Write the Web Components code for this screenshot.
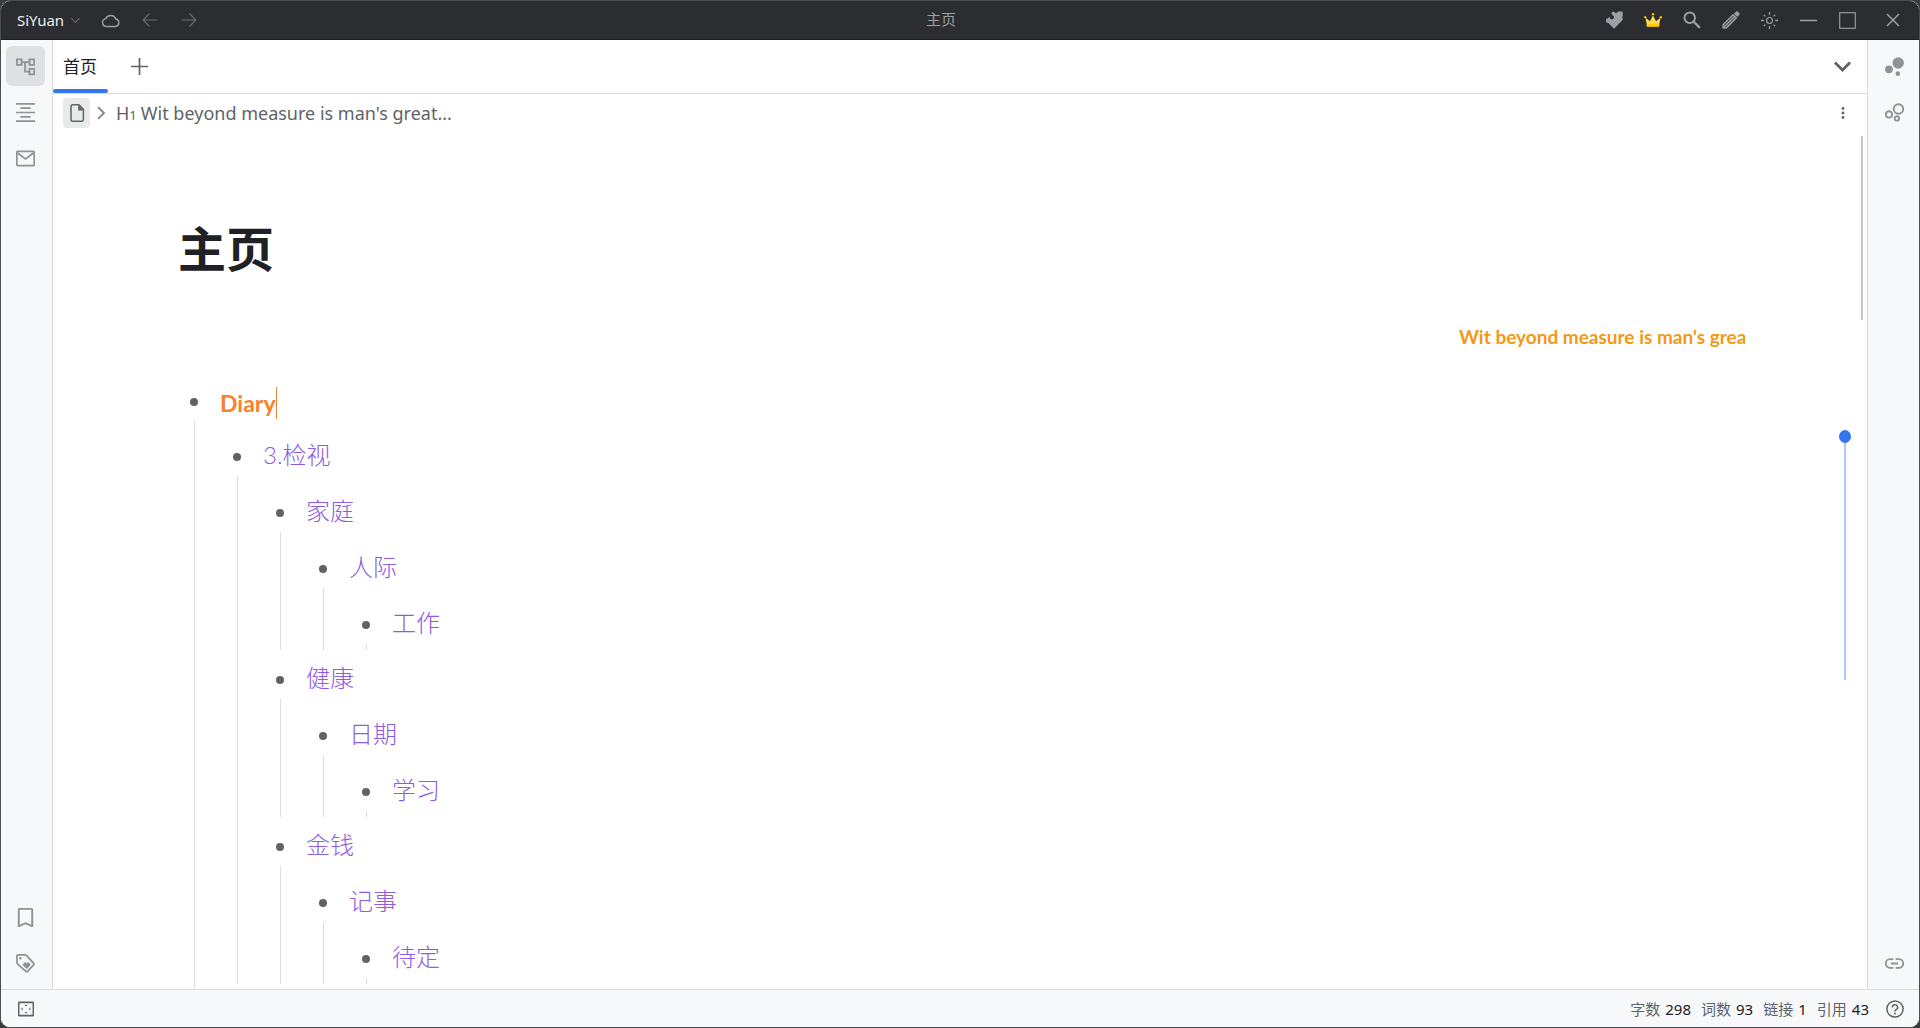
<!DOCTYPE html>
<html lang="zh-CN">
<head>
<meta charset="UTF-8">
<meta name="viewport" content="width=device-width, initial-scale=1">
<title>主页 - SiYuan</title>
<style>
    html, body { height: 100%; }
    body {
        margin: 0;
        background: #3a3b3d;
        overflow: hidden;
        font-family: "Noto Sans", "Noto Sans CJK SC", sans-serif;
        --surface: #f6f8fa;
        --border: #dcdddf;
        --icon: #8f9297;
        --text: #5f6368;
        --primary: #3575f0;
    }
</style>
</head>
<body>
<sy-app></sy-app>

<script>
// Inline icons, all filled or stroked with currentColor
const ICONS = {
    down: '<path d="M3 7l9 9 9-9" fill="none" stroke="currentColor" stroke-width="2.400"/>',
    downBold: '<path d="M2.500 7l9.500 9.500L21.500 7" fill="none" stroke="currentColor" stroke-width="3.500"/>',
    cloud: '<path d="M7 19.500a5 5 0 0 1-1-9.900A6.800 6.800 0 0 1 18.600 10.200 4.700 4.700 0 0 1 18.300 19.500z" fill="none" stroke="currentColor" stroke-width="1.800"/>',
    back: '<path d="M23 12H2M11 2.500L1.800 12l9.200 9.500" fill="none" stroke="currentColor" stroke-width="1.800"/>',
    forward: '<path d="M1 12h21M13 2.500l9.200 9.500-9.200 9.500" fill="none" stroke="currentColor" stroke-width="1.800"/>',
    plugin: '<path d="M8.500 3a2.500 2.500 0 0 1 4.200-1.300L15 3l1.500-1.700q1-.8 2.500-.6h3.500q1.200 0 1.200 1.200v4q0 1-1.200 2a3 3 0 0 1 0 5L12 23.500 4.500 16a3.200 3.200 0 1 1-.5-6.500L6.500 7.500a2.800 2.800 0 1 0 3.500-2z" fill="currentColor"/>',
    crown: '<path d="M2 9l6 4.500L12 5.500l4 8L22 9l-2 10.500q0 1-1.500 1h-13q-1.500 0-1.500-1z" fill="#ffdc4a"/><path d="M3.500 17.500h17v2q0 1.500-1.500 1.500H5q-1.500 0-1.500-1.500z" fill="#ffc700"/><g fill="#ffc000"><circle cx="12" cy="4.200" r="1.600"/><circle cx="1.600" cy="8.200" r="1.600"/><circle cx="22.400" cy="8.200" r="1.600"/></g>',
    search: '<circle cx="9" cy="9" r="7" fill="none" stroke="currentColor" stroke-width="2.600"/><path d="M14 14l8.500 8.500" stroke="currentColor" stroke-width="3"/>',
    edit: '<path d="M1.500 22.500v-4.200L14.800 5l4.200 4.200L5.700 22.500zM3 21L16.500 7.500" fill="none" stroke="currentColor" stroke-width="2"/><path d="M16 3.800L19 .8q1-.8 2 0L23.200 3q.8 1 0 2l-3 3z" fill="currentColor"/>',
    light: '<circle cx="12" cy="12" r="4.200" fill="none" stroke="currentColor" stroke-width="1.600"/><path d="M12 0v4M12 20v4M0 12h4M20 12h4M4 4l2.200 2.200M17.800 17.800L20 20M20 4l-2.200 2.200M6.200 17.800L4 20" stroke="currentColor" stroke-width="1.800"/>',
    min: '<path d="M0 12h24" stroke="currentColor" stroke-width="2"/>',
    max: '<rect x="1" y="1" width="22" height="22" fill="none" stroke="currentColor" stroke-width="1.600"/>',
    close: '<path d="M4 4l16 16M20 4L4 20" stroke="currentColor" stroke-width="2"/>',
    files: '<path d="M1 3h6v7H1zM17 3h6v7h-6zM17 15h6v7h-6zM7 6.500h10M11.500 6.500v12H17" fill="none" stroke="currentColor" stroke-width="2.400"/>',
    outline: '<path d="M0 1h24M5.500 6.500h13M0 12h24M5.500 17.500h13M0 23h24" stroke="currentColor" stroke-width="2.200"/>',
    mail: '<rect x="1" y="3" width="22" height="18" rx="1.500" fill="none" stroke="currentColor" stroke-width="2.200"/><path d="M2 5l10 7.500L22 5" fill="none" stroke="currentColor" stroke-width="2.200"/>',
    bookmark: '<path d="M3.500 23V2.500q0-1.500 1.500-1.500h14q1.500 0 1.500 1.500V23L12 19.200z" fill="none" stroke="currentColor" stroke-width="2.400"/>',
    tag: '<path d="M1.200 2.500q0-1.300 1.300-1.300h9q1 0 1.600.6l9.200 10q1 1 0 2L14.500 22q-1 1-2 0L1.900 12.500q-.7-.6-.7-1.600z" fill="none" stroke="currentColor" stroke-width="2.200"/><circle cx="5.500" cy="5.500" r="1.600" fill="currentColor"/><path d="M13.500 19L9.500 15a2.600 2.600 0 0 1 4-3.400 2.600 2.600 0 0 1 4 3.400z" fill="currentColor"/>',
    graph: '<g fill="currentColor"><circle cx="16.700" cy="7.500" r="7.200"/><circle cx="5" cy="15.500" r="4.900"/><circle cx="16.200" cy="21" r="2.900"/></g>',
    globalGraph: '<g fill="none" stroke="currentColor" stroke-width="2.400"><circle cx="17" cy="7.500" r="6"/><circle cx="5" cy="14.500" r="4"/><circle cx="15" cy="19.500" r="2.800"/></g>',
    link: '<path d="M10.500 6.500H6.500a5.500 5.500 0 0 0 0 11h4M13.500 6.500h4a5.500 5.500 0 0 1 0 11h-4M7.500 12h9" fill="none" stroke="currentColor" stroke-width="2.400"/>',
    add: '<path d="M12 0v24M0 12h24" stroke="currentColor" stroke-width="2.400"/>',
    file: '<path d="M4 3q0-2 2-2h8.500L20.500 7v14q0 2-2 2H6q-2 0-2-2z" fill="none" stroke="currentColor" stroke-width="2"/><path d="M13.500 1v7.500h7.500z" fill="currentColor"/>',
    right: '<path d="M7 2l10 10L7 22" fill="none" stroke="currentColor" stroke-width="3.400"/>',
    more: '<g fill="currentColor"><circle cx="12" cy="3" r="2.800"/><circle cx="12" cy="12" r="2.800"/><circle cx="12" cy="21" r="2.800"/></g>',
    dock: '<rect x="1" y="2" width="22" height="20" rx="1" fill="none" stroke="currentColor" stroke-width="2.400"/><path d="M10 7.500l2-2.500 2 2.500zM10 16.500l2 2.500 2-2.500zM7 9.800L4.500 12 7 14.200zM17 9.800l2.500 2.200-2.500 2.200z" fill="currentColor"/>',
    help: '<circle cx="12" cy="12" r="10.800" fill="none" stroke="currentColor" stroke-width="2"/><path d="M8.500 10a3.500 3.500 0 1 1 5 2.900Q12 13.800 12 15.300" fill="none" stroke="currentColor" stroke-width="2"/><circle cx="12" cy="18" r="1.300" fill="currentColor"/>'
};

class SyIcon extends HTMLElement {
    constructor() {
        super();
        this.attachShadow({ mode: 'open' });
    }

    connectedCallback() {
        const size = this.getAttribute('size') || 16;
        this.shadowRoot.innerHTML = `
            <style>
                :host { display: inline-flex; flex: none; }
                svg { display: block; }
            </style>
            <svg viewBox="0 0 24 24" width="${size}" height="${size}" aria-hidden="true">${ICONS[this.getAttribute('name')] || ''}</svg>
        `;
    }
}

class SyButton extends HTMLElement {
    constructor() {
        super();
        this.attachShadow({ mode: 'open' });
    }

    connectedCallback() {
        this.shadowRoot.innerHTML = `
            <style>
                :host { display: flex; flex: none; width: 39px; height: 40px; }
                button {
                    flex: 1;
                    display: flex;
                    align-items: center;
                    justify-content: center;
                    padding: 0;
                    border: none;
                    border-radius: 6px;
                    background: none;
                    color: inherit;
                    cursor: pointer;
                }
                :host([active]) button { background: #dfe0e2; }
            </style>
            <button type="button" aria-label="${this.getAttribute('label')}">
                <sy-icon name="${this.getAttribute('icon')}" size="${this.getAttribute('size') || 16}"></sy-icon>
            </button>
        `;
    }
}

class SyToolbar extends HTMLElement {
    constructor() {
        super();
        this.attachShadow({ mode: 'open' });
    }

    connectedCallback() {
        this.shadowRoot.innerHTML = `
            <style>
                :host {
                    display: grid;
                    grid-template-columns: 1fr auto 1fr;
                    align-items: stretch;
                    height: 38px;
                    flex: none;
                    background: #2b2d30;
                    border-bottom: 1px solid #1e1f22;
                    color: #9aa0a6;
                }
                .left, .right { display: flex; align-items: stretch; }
                .left { padding-left: 16px; color: #6b6f75; }
                .right { justify-content: flex-end; }
                sy-button { height: 38px; }
                .workspace {
                    display: flex;
                    align-items: center;
                    gap: 6px;
                    width: 74px;
                    padding: 0;
                    border: none;
                    background: none;
                    color: #6b6f75;
                    font: 15px "Noto Sans", sans-serif;
                }
                .workspace span { color: #eceef0; }
                .cloud { color: #9aa0a6; }
                .title { padding-right: 38px; font-size: 15px; line-height: 36px; }
                .close { width: 52px; }
            </style>
            <div class="left">
                <button class="workspace" type="button"><span>SiYuan</span><sy-icon name="down" size="11"></sy-icon></button>
                <sy-button class="cloud" icon="cloud" size="19" label="云端同步"></sy-button>
                <sy-button icon="back" label="后退"></sy-button>
                <sy-button icon="forward" label="前进"></sy-button>
            </div>
            <div class="title">主页</div>
            <div class="right">
                <sy-button icon="plugin" size="18" label="插件"></sy-button>
                <sy-button icon="crown" size="18" label="会员"></sy-button>
                <sy-button icon="search" size="18" label="搜索"></sy-button>
                <sy-button icon="edit" size="18" label="编辑模式"></sy-button>
                <sy-button icon="light" size="17" label="外观"></sy-button>
                <sy-button icon="min" size="17" label="最小化"></sy-button>
                <sy-button icon="max" size="17" label="最大化"></sy-button>
                <sy-button class="close" icon="close" size="18" label="关闭"></sy-button>
            </div>
        `;
    }
}

class SyDock extends HTMLElement {
    constructor() {
        super();
        this.attachShadow({ mode: 'open' });
        this.shadowRoot.innerHTML = `
            <style>
                :host {
                    display: flex;
                    flex-direction: column;
                    justify-content: space-between;
                    flex: none;
                    width: 51px;
                    box-sizing: border-box;
                    padding: 6px 5px;
                    background: var(--surface);
                    color: var(--icon);
                }
                .group { display: flex; flex-direction: column; gap: 6px; }
                :host([side="right"]) .group { align-items: flex-end; }
            </style>
            <div class="group"><slot name="top"></slot></div>
            <div class="group"><slot name="bottom"></slot></div>
        `;
    }
}

class SyTabs extends HTMLElement {
    constructor() {
        super();
        this.attachShadow({ mode: 'open' });
    }

    connectedCallback() {
        this.shadowRoot.innerHTML = `
            <style>
                :host {
                    display: flex;
                    flex: none;
                    height: 53px;
                    align-items: stretch;
                    border-bottom: 1px solid var(--border);
                    color: var(--text);
                }
                .tab {
                    position: relative;
                    border: none;
                    background: none;
                    padding: 0 11px 2px 10px;
                    font: 17px "Noto Sans CJK SC", sans-serif;
                    color: #202124;
                }
                .tab::after {
                    content: "";
                    position: absolute;
                    left: 0;
                    right: 0;
                    bottom: 0;
                    height: 4px;
                    border-radius: 2px;
                    background: var(--primary);
                }
                sy-button { align-self: center; }
                .add { margin-left: 12px; }
                .list { margin-left: auto; margin-right: 5px; }
            </style>
            <button class="tab" type="button" role="tab" aria-selected="true">首页</button>
            <sy-button class="add" icon="add" size="17" label="新建页签"></sy-button>
            <sy-button class="list" icon="downBold" size="19" label="页签列表"></sy-button>
        `;
    }
}

class SyBreadcrumb extends HTMLElement {
    constructor() {
        super();
        this.attachShadow({ mode: 'open' });
    }

    connectedCallback() {
        this.shadowRoot.innerHTML = `
            <style>
                :host {
                    display: flex;
                    flex: none;
                    align-items: center;
                    height: 38px;
                    padding: 0 5px 0 10px;
                    color: var(--text);
                }
                .doc {
                    display: flex;
                    align-items: center;
                    justify-content: center;
                    width: 27px;
                    height: 30px;
                    padding: 0;
                    border: none;
                    border-radius: 4px;
                    background: #e8eae9;
                    color: inherit;
                }
                .arrow { margin: 0 8px 0 4px; color: #85898e; }
                a { display: flex; align-items: baseline; gap: 4px; color: inherit; text-decoration: none; font-size: 18px; }
                .level small { font-size: 13px; }
                .more { margin-left: auto; }
            </style>
            <button class="doc" type="button" aria-label="文档"><sy-icon name="file" size="18"></sy-icon></button>
            <sy-icon class="arrow" name="right" size="14"></sy-icon>
            <a href="#title"><span class="level">H<small>1</small></span><span>Wit beyond measure is man's great...</span></a>
            <sy-button class="more" icon="more" size="12" label="更多"></sy-button>
        `;
    }
}

class SyItem extends HTMLElement {
    constructor() {
        super();
        this.attachShadow({ mode: 'open' });
    }

    connectedCallback() {
        this.setAttribute('role', 'listitem');
        this.shadowRoot.innerHTML = `
            <style>
                :host { display: grid; grid-template-columns: 43px 1fr; color: #8d5ce2; }
                .gutter { display: flex; flex-direction: column; align-items: center; width: 34px; }
                .bullet { display: flex; align-items: center; height: 38px; padding: 11px 0 0; }
                .bullet::before { content: ""; width: 8px; height: 8px; border-radius: 50%; background: #5f6368; }
                .guide { flex: 1; width: 1px; background: var(--border); }
                .text {
                    display: flex;
                    align-items: center;
                    height: 56px;
                    font: 300 24px/32px "Lato", "Noto Sans CJK SC", sans-serif;
                }
                :host([leaf]) .text { height: 55px; }
                :host([current]) .text { height: 49px; padding-top: 6px; }
                :host([current]) .text span {
                    color: #fa8128;
                    font-size: 23px;
                    font-weight: 700;
                    border-right: 1px solid #e0893a;
                }
                :host([current]) .body { padding-bottom: 16px; }
            </style>
            <div class="gutter"><div class="bullet"></div><div class="guide"></div></div>
            <div class="body">
                <div class="text"><span>${this.getAttribute('text')}</span></div>
                <slot></slot>
            </div>
        `;
    }
}

const OUTLINE = [
    ['家庭', '人际', '工作'],
    ['健康', '日期', '学习'],
    ['金钱', '记事', '待定']
];

class SyEditor extends HTMLElement {
    constructor() {
        super();
        this.attachShadow({ mode: 'open' });
    }

    connectedCallback() {
        const groups = OUTLINE.map(([a, b, c]) => `
            <sy-item text="${a}"><sy-item text="${b}"><sy-item text="${c}" leaf></sy-item></sy-item></sy-item>
        `).join('');

        this.shadowRoot.innerHTML = `
            <style>
                :host { display: block; position: relative; flex: 1; min-height: 0; overflow: hidden; }
                .content { padding: 74px 122px 0 124px; }
                h1 {
                    margin: 0;
                    padding-left: 1px;
                    font: 700 48px/80px "Noto Sans CJK SC", sans-serif;
                    color: #202124;
                }
                .marquee {
                    width: 286px;
                    margin: 37px 0 0 auto;
                    overflow: hidden;
                    white-space: nowrap;
                    font: 700 19px/28px "Lato", sans-serif;
                    color: #f39817;
                }
                .list { margin-top: 21px; }
                .scrollbar {
                    position: absolute;
                    top: 4px;
                    right: 4px;
                    width: 2px;
                    height: 184px;
                    background: #c4c4c4;
                }
                .progress {
                    position: absolute;
                    top: 298px;
                    right: 16px;
                    width: 12px;
                    height: 250px;
                    display: flex;
                    flex-direction: column;
                    align-items: center;
                }
                .progress::before { content: ""; width: 12px; height: 13px; border-radius: 50%; background: var(--primary); }
                .progress::after { content: ""; flex: 1; width: 2px; background: #aec8fb; }
            </style>
            <div class="content">
                <h1 id="title">主页</h1>
                <div class="marquee">Wit beyond measure is man's great</div>
                <div class="list" role="list">
                    <sy-item text="Diary" current>
                        <sy-item text="3.检视">${groups}</sy-item>
                    </sy-item>
                </div>
            </div>
            <div class="scrollbar"></div>
            <div class="progress"></div>
        `;
    }
}

class SyStatus extends HTMLElement {
    constructor() {
        super();
        this.attachShadow({ mode: 'open' });
    }

    connectedCallback() {
        const counts = [['字数', 298], ['词数', 93], ['链接', 1], ['引用', 43]];
        this.shadowRoot.innerHTML = `
            <style>
                :host {
                    display: flex;
                    flex: none;
                    align-items: center;
                    height: 37px;
                    padding: 0 5px;
                    border-top: 1px solid var(--border);
                    background: var(--surface);
                    color: var(--text);
                }
                .counts { display: flex; gap: 10px; margin-left: auto; font-size: 15px; }
                .counts div { display: flex; align-items: baseline; gap: 5px; }
                b { font-weight: 400; color: #202124; }
                .help { margin-left: 6px; }
            </style>
            <sy-button icon="dock" label="停靠栏"></sy-button>
            <div class="counts">
                ${counts.map(([name, value]) => `<div><span>${name}</span><b>${value}</b></div>`).join('')}
            </div>
            <sy-button class="help" icon="help" size="18" label="帮助"></sy-button>
        `;
    }
}

class SyApp extends HTMLElement {
    constructor() {
        super();
        this.attachShadow({ mode: 'open' });
    }

    connectedCallback() {
        this.shadowRoot.innerHTML = `
            <style>
                :host {
                    display: flex;
                    flex-direction: column;
                    height: 100vh;
                    box-sizing: border-box;
                    border: 1px solid #4b4d50;
                    border-radius: 10px;
                    overflow: hidden;
                    background: #fff;
                }
                .main { display: flex; flex: 1; min-height: 0; }
                .layout {
                    display: flex;
                    flex-direction: column;
                    flex: 1;
                    min-width: 0;
                    border: solid var(--border);
                    border-width: 0 1px;
                }
            </style>
            <sy-toolbar></sy-toolbar>
            <div class="main">
                <sy-dock>
                    <sy-button slot="top" icon="files" size="19" label="文档树" active></sy-button>
                    <sy-button slot="top" icon="outline" size="19" label="大纲"></sy-button>
                    <sy-button slot="top" icon="mail" size="19" label="收集箱"></sy-button>
                    <sy-button slot="bottom" icon="bookmark" size="19" label="书签"></sy-button>
                    <sy-button slot="bottom" icon="tag" size="19" label="标签"></sy-button>
                </sy-dock>
                <div class="layout">
                    <sy-tabs></sy-tabs>
                    <sy-breadcrumb></sy-breadcrumb>
                    <sy-editor></sy-editor>
                </div>
                <sy-dock side="right">
                    <sy-button slot="top" icon="graph" size="19" label="关系图"></sy-button>
                    <sy-button slot="top" icon="globalGraph" size="19" label="全局关系图"></sy-button>
                    <sy-button slot="bottom" icon="link" size="19" label="反向链接"></sy-button>
                </sy-dock>
            </div>
            <sy-status></sy-status>
        `;
    }
}

customElements.define('sy-icon', SyIcon);
customElements.define('sy-button', SyButton);
customElements.define('sy-toolbar', SyToolbar);
customElements.define('sy-dock', SyDock);
customElements.define('sy-tabs', SyTabs);
customElements.define('sy-breadcrumb', SyBreadcrumb);
customElements.define('sy-item', SyItem);
customElements.define('sy-editor', SyEditor);
customElements.define('sy-status', SyStatus);
customElements.define('sy-app', SyApp);
</script>
</body>
</html>
